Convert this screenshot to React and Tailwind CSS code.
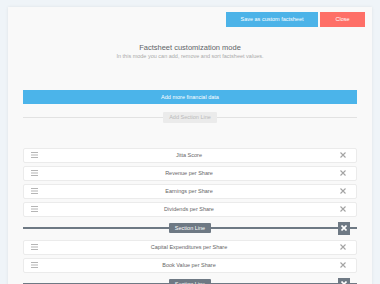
import React from 'react';

const font = { fontFamily: '"Liberation Sans", Arial, sans-serif' };

const items = [
  { type: 'row', label: 'Jitta Score' },
  { type: 'row', label: 'Revenue per Share' },
  { type: 'row', label: 'Earnings per Share' },
  { type: 'row', label: 'Dividends per Share' },
  { type: 'section' },
  { type: 'row', label: 'Capital Expenditures per Share' },
  { type: 'row', label: 'Book Value per Share' },
  { type: 'section' },
];

const Burger = () => (
  <svg width="7" height="6" viewBox="0 0 7 6" className="shrink-0">
    <rect x="0" y="0" width="7" height="1" fill="#b5b5b5" />
    <rect x="0" y="2.5" width="7" height="1" fill="#b5b5b5" />
    <rect x="0" y="5" width="7" height="1" fill="#b5b5b5" />
  </svg>
);

const Cross = ({ color = '#a3a3a3', size = 6, w = 1.1 }) => (
  <svg width={size} height={size} viewBox="0 0 6 6" className="shrink-0">
    <path d="M0.5 0.5 L5.5 5.5 M5.5 0.5 L0.5 5.5" stroke={color} strokeWidth={w} />
  </svg>
);

const Row = ({ label }) => (
  <div className="h-[15px] bg-white border border-[#ebebeb] rounded-[2px] flex items-center pl-[7px] pr-[10px]">
    <Burger />
    <span className="flex-1 text-center text-[5.5px] text-[#666]">{label}</span>
    <Cross />
  </div>
);

const SectionLine = () => (
  <div className="relative h-[17px] flex items-center">
    <div className="w-full h-[2px] bg-[#6e7984]" />
    <div className="absolute left-1/2 -translate-x-1/2 top-[3px] h-[10px] w-[42px] bg-[#6e7984] text-white text-[5.5px] flex items-center justify-center rounded-[1px]">
      Section Line
    </div>
    <div className="absolute right-[7px] top-[2px] w-[12px] h-[13px] bg-[#6e7984] flex items-center justify-center">
      <Cross color="#ffffff" size={6} w={1.6} />
    </div>
  </div>
);

export default function App() {
  return (
    <div className="h-[284px] overflow-hidden bg-[#eff4f8] pt-[7px] px-[8px]" style={font}>
      <div className="bg-[#f9f9f9] shadow-[0_0_3px_rgba(0,0,0,0.08)] h-[300px] px-[15px]">
        <div className="flex justify-end gap-[2px] pt-[5px] -mr-[8px]">
          <button className="w-[92px] h-[15px] bg-[#4cb3e8] text-white text-[5.5px]">
            Save as custom factsheet
          </button>
          <button className="w-[45px] h-[15px] bg-[#fe6f67] text-white text-[5.5px]">
            Close
          </button>
        </div>

        <div className="mt-[16px] text-center text-[7.5px] leading-[9px] text-[#5f6468]">
          Factsheet customization mode
        </div>
        <div className="mt-[1px] text-center text-[5.5px] leading-[7px] text-[#a9a9a9]">
          In this mode you can add, remove and sort factsheet values.
        </div>

        <button className="mt-[30px] w-full h-[14px] bg-[#4bb4ea] text-white text-[5.5px]">
          Add more financial data
        </button>

        <div className="relative mt-[6px] h-[11px] flex items-center">
          <div className="w-full h-[1px] bg-[#e2e2e2]" />
          <div className="absolute left-1/2 -translate-x-1/2 top-0 h-[11px] w-[54px] bg-[#ebebeb] text-[#b9b9b9] text-[5.5px] flex items-center justify-center rounded-[1px]">
            Add Section Line
          </div>
        </div>

        <div className="mt-[25px] flex flex-col gap-[3px]">
          {items.map((it, i) =>
            it.type === 'row' ? <Row key={i} label={it.label} /> : <SectionLine key={i} />
          )}
        </div>
      </div>
    </div>
  );
}
